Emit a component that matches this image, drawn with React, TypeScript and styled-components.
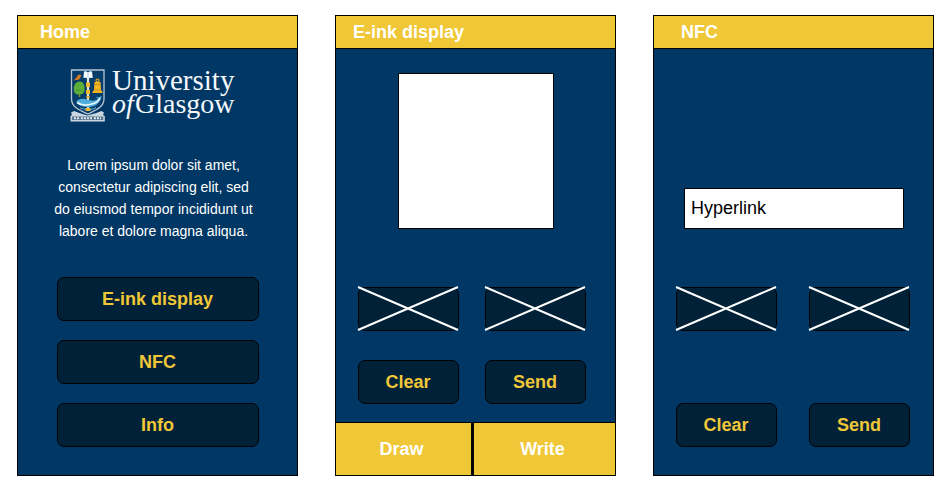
import React from "react";
import styled, { createGlobalStyle } from "styled-components";

const color = {
  gold: "#f0c737",
  navy: "#003764",
  ink: "#002137",
  line: "#000000",
  paper: "#ffffff",
};

const GlobalStyle = createGlobalStyle`
  *, *::before, *::after { box-sizing: border-box; }
  body {
    margin: 0;
    background: ${color.paper};
    font-family: "Liberation Sans", Arial, sans-serif;
  }
`;

const Board = styled.main`
  display: grid;
  grid-template-columns: repeat(auto-fit, minmax(260px, 1fr));
  gap: 37px;
  padding: 15px 17px 16px;
`;

const Screen = styled.section`
  display: flex;
  flex-direction: column;
  border: 1px solid ${color.line};
  background: ${color.navy};
`;

const TitleBar = styled.header<{ $inset: number }>`
  padding: 5px ${(p) => p.$inset}px;
  border-bottom: 1px solid ${color.line};
  background: ${color.gold};
`;

const Title = styled.h2`
  margin: 0;
  color: ${color.paper};
  font-size: 18px;
  font-weight: 700;
  line-height: 22px;
`;

const Intro = styled.div`
  display: flex;
  flex-direction: column;
  align-items: center;
  gap: 32px;
  padding: 20px 44px 0 36px;
`;

const LogoDrawing = styled.svg`
  display: block;
  width: 167px;
  height: 53px;
  overflow: visible;
`;

const Blurb = styled.p`
  margin: 0;
  color: ${color.paper};
  font-size: 14px;
  line-height: 22px;
  text-align: center;
`;

const Menu = styled.nav`
  display: flex;
  flex-direction: column;
  gap: 19px;
  padding: 35px 38px 28px 39px;
`;

const ActionButton = styled.button`
  width: 100%;
  height: 44px;
  padding: 0 1px 0 0;
  border: 1px solid ${color.line};
  border-radius: 7px;
  background: ${color.ink};
  color: ${color.gold};
  font: 700 18px/22px "Liberation Sans", Arial, sans-serif;
  cursor: pointer;
`;

const Preview = styled.div`
  align-self: center;
  width: 156px;
  aspect-ratio: 1;
  margin: 24px 0 58px;
  border: 1px solid ${color.line};
  background: ${color.paper};
`;

const Controls = styled.div<{ $between: number; $right: number; $rowGap: number }>`
  display: grid;
  grid-template-columns: 1fr 1fr;
  gap: ${(p) => p.$rowGap}px ${(p) => p.$between}px;
  padding: 0 ${(p) => p.$right}px 0 22px;
`;

const Slot = styled.div`
  position: relative;
  height: 44px;
  border: 1px solid ${color.line};
  border-radius: 7px;
  background: ${color.ink};
`;

const SlotCross = styled.svg`
  position: absolute;
  inset: -1px;
  width: calc(100% + 2px);
  height: calc(100% + 2px);
  overflow: visible;
`;

const Tabs = styled.div`
  display: grid;
  grid-template-columns: 45fr 47fr;
  gap: 3px;
  margin-top: 18px;
  border-top: 1px solid ${color.line};
  background: ${color.line};
`;

const TabButton = styled.button`
  height: 52px;
  padding: 0 4px 0 0;
  border: 0;
  background: ${color.gold};
  color: ${color.paper};
  font: 700 18px/22px "Liberation Sans", Arial, sans-serif;
  cursor: pointer;
`;

const LinkInput = styled.input`
  align-self: stretch;
  height: 41px;
  margin: 139px 29px 58px 30px;
  padding: 0 6px;
  border: 1px solid ${color.line};
  border-radius: 0;
  background: ${color.paper};
  color: ${color.line};
  font: 18px/22px "Liberation Sans", Arial, sans-serif;
`;

function CrossedSlot() {
  return (
    <Slot>
      <SlotCross viewBox="0 0 101 44" preserveAspectRatio="none" aria-hidden="true">
        <path d="M0 0 L100 43 M0 43 L100 0" stroke="#fff" strokeWidth="2" fill="none" />
      </SlotCross>
    </Slot>
  );
}

function UniversityLogo() {
  return (
    <LogoDrawing viewBox="0 0 167 53" role="img" aria-label="University of Glasgow">
      {/* shield */}
      <path
        d="M1.500 1 H34 V30 C34 38 26 41 18 45 C9 41 1.500 38 1.500 30 Z"
        fill="#063c69"
        stroke="#b4c5d5"
        strokeWidth="1.3"
      />
      {/* mace */}
      <path d="M18 9 V42" stroke="#dfe6e0" strokeWidth="2.200" />
      <path
        d="M16 13.500 H20 V18 H16 Z M16 21 H20 V25 H16 Z M16.500 27 H19.500 V29 H16.500 Z M15.500 39 H20.500 V42 H15.500 Z"
        fill="#edb92b"
      />
      {/* open book */}
      <path d="M14 2.500 Q16 2 18 3.200 Q20 2 22 2.500 L22.800 9 Q20 8.200 18 9.800 Q16 8.200 13.400 9 Z" fill="#f4f9fc" />
      <path d="M18 3.200 V9" stroke="#9dbad0" strokeWidth="0.6" />
      {/* bird */}
      <path d="M3.500 11.600 L6.500 8.500 Q7.500 5.200 10.300 5.600 L11.500 7 L10.500 7.800 Q10 11 6.500 11 Z" fill="#d67a20" />
      {/* tree */}
      <path d="M9.500 22 V28" stroke="#7d9a32" strokeWidth="1.6" />
      <path
        d="M9.700 12.500 C13 12.500 14.800 16 14.700 20 C14.500 24.500 12 26 9.700 25 C6 26.500 3.800 24 3.800 20 C3.800 16 6 12.500 9.700 12.500 Z"
        fill="#5cae38"
      />
      <path d="M6 21.500 Q9 20 12.500 22" stroke="#459633" strokeWidth="0.9" fill="none" />
      {/* bell */}
      <circle cx="27.500" cy="11.500" r="1.500" fill="none" stroke="#e8ad22" strokeWidth="1.2" />
      <path d="M24.500 13 H30.500 L31 20.500 L32.800 24 H22 L24 20.500 Z" fill="#f0b41e" />
      <path d="M25 15.500 H30.300 M24 21 H31" stroke="#b9851d" strokeWidth="0.7" />
      {/* fish over water */}
      <path
        d="M6.300 32.500 C9 29.500 13 29 17 30.500 C21 32 25 32.500 28 29.500 L25.500 28 L28.500 28.300 L32 27 L30.500 30.500 C28.500 36 23 38.500 16.500 38 C11 37.500 8 36 6.300 32.500 Z"
        fill="#4eaedb"
      />
      <path d="M7 33.500 C11 36.500 17 36.500 22 35 C26 34 29 32 30 29" stroke="#e8f6fc" strokeWidth="1.600" fill="none" />
      <path d="M10 39 Q14 40.500 16 40 M20 40.500 Q24 40 26 38.500" stroke="#74bde0" strokeWidth="0.9" fill="none" />
      {/* motto ribbon */}
      <path
        d="M4 42 Q10 44.500 17.500 46.500 Q26 44.500 31.500 42 L34 43.500 L33 46 L34.800 47 V52.500 H0.500 V47 L2 46 L1 43.500 Z"
        fill="#c9d5e0"
      />
      <path d="M2 47.500 H33.300 V51 H2 Z" fill="#5a7692" />
      <path d="M4 49.300 H9 M11 49.300 H22 M24 49.300 H31" stroke="#dce5ec" strokeWidth="2" strokeDasharray="2 1" />
      <g fill="#f4f8fb" fontFamily="'Liberation Serif', 'Times New Roman', serif">
        <text x="42" y="21" fontSize="29">University</text>
        <text x="42" y="44" fontSize="28" fontStyle="italic">of</text>
        <text x="65" y="44" fontSize="28">Glasgow</text>
      </g>
    </LogoDrawing>
  );
}

export default function App() {
  return (
    <>
      <GlobalStyle />
      <Board>
        <Screen>
          <TitleBar $inset={22}>
            <Title>Home</Title>
          </TitleBar>
          <Intro>
            <UniversityLogo />
            <Blurb>
              Lorem ipsum dolor sit amet, consectetur adipiscing elit, sed do eiusmod tempor
              incididunt ut labore et dolore magna aliqua.
            </Blurb>
          </Intro>
          <Menu>
            <ActionButton type="button">E-ink display</ActionButton>
            <ActionButton type="button">NFC</ActionButton>
            <ActionButton type="button">Info</ActionButton>
          </Menu>
        </Screen>

        <Screen>
          <TitleBar $inset={17}>
            <Title>E-ink display</Title>
          </TitleBar>
          <Preview />
          <Controls $between={26} $right={29} $rowGap={29}>
            <CrossedSlot />
            <CrossedSlot />
            <ActionButton type="button">Clear</ActionButton>
            <ActionButton type="button">Send</ActionButton>
          </Controls>
          <Tabs>
            <TabButton type="button">Draw</TabButton>
            <TabButton type="button">Write</TabButton>
          </Tabs>
        </Screen>

        <Screen>
          <TitleBar $inset={27}>
            <Title>NFC</Title>
          </TitleBar>
          <LinkInput type="text" aria-label="Hyperlink" defaultValue="Hyperlink" />
          <Controls $between={32} $right={23} $rowGap={72}>
            <CrossedSlot />
            <CrossedSlot />
            <ActionButton type="button">Clear</ActionButton>
            <ActionButton type="button">Send</ActionButton>
          </Controls>
        </Screen>
      </Board>
    </>
  );
}
